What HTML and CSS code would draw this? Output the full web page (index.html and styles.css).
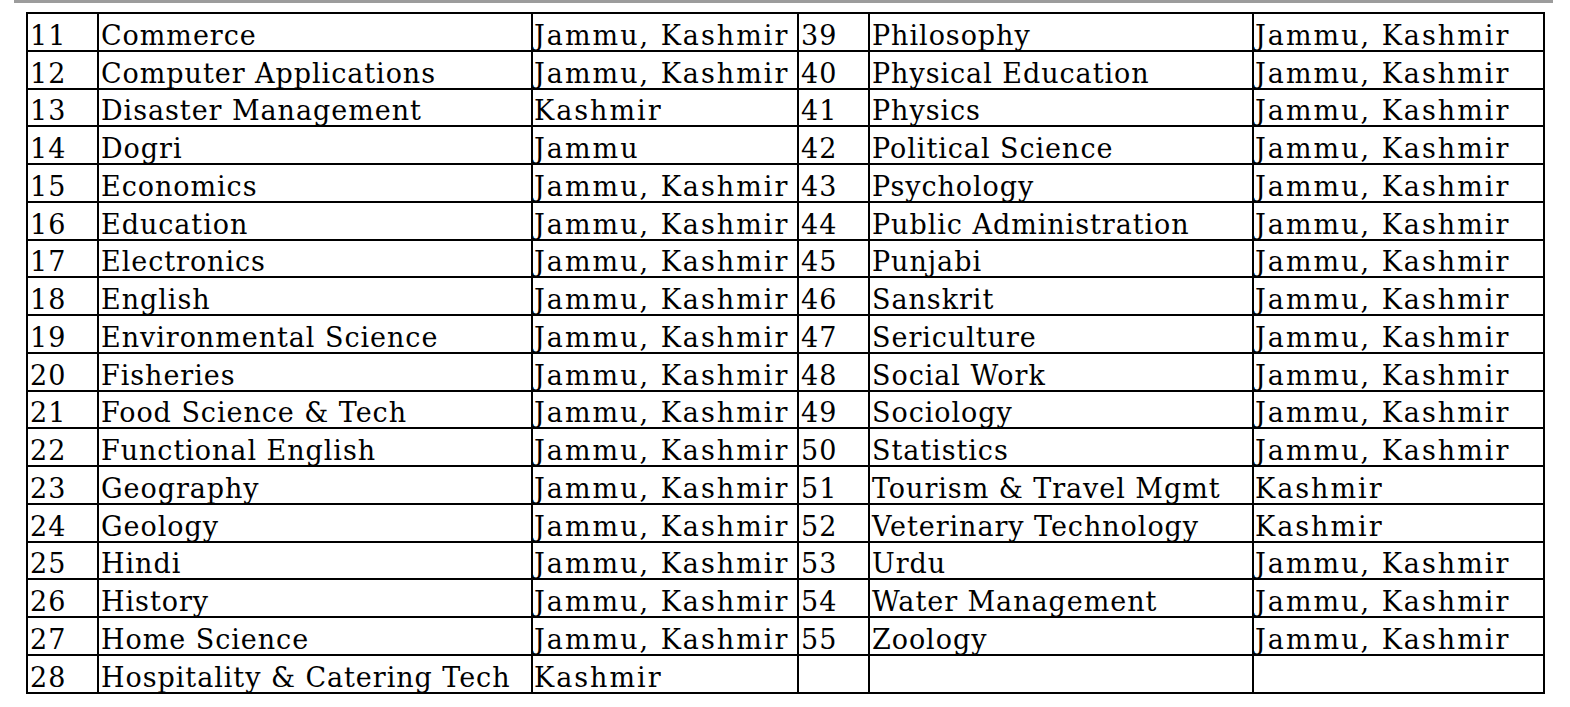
FILE: index.html
```html
<!DOCTYPE html>
<html>
<head>
<meta charset="utf-8">
<link rel="stylesheet" href="styles.css">
</head>
<body>
<div class="topbar"></div>
<table class="grid">
<colgroup>
<col class="c-no"><col class="c-sub"><col class="c-loc"><col class="c-no2"><col class="c-sub2"><col class="c-loc2">
</colgroup>
<tbody>
<tr><td>11</td><td>Commerce</td><td class="loc">Jammu, Kashmir</td><td>39</td><td>Philosophy</td><td class="loc">Jammu, Kashmir</td></tr>
<tr><td>12</td><td>Computer Applications</td><td class="loc">Jammu, Kashmir</td><td>40</td><td>Physical Education</td><td class="loc">Jammu, Kashmir</td></tr>
<tr><td>13</td><td>Disaster Management</td><td class="loc">Kashmir</td><td>41</td><td>Physics</td><td class="loc">Jammu, Kashmir</td></tr>
<tr><td>14</td><td>Dogri</td><td class="loc">Jammu</td><td>42</td><td>Political Science</td><td class="loc">Jammu, Kashmir</td></tr>
<tr><td>15</td><td>Economics</td><td class="loc">Jammu, Kashmir</td><td>43</td><td>Psychology</td><td class="loc">Jammu, Kashmir</td></tr>
<tr><td>16</td><td>Education</td><td class="loc">Jammu, Kashmir</td><td>44</td><td>Public Administration</td><td class="loc">Jammu, Kashmir</td></tr>
<tr><td>17</td><td>Electronics</td><td class="loc">Jammu, Kashmir</td><td>45</td><td>Punjabi</td><td class="loc">Jammu, Kashmir</td></tr>
<tr><td>18</td><td>English</td><td class="loc">Jammu, Kashmir</td><td>46</td><td>Sanskrit</td><td class="loc">Jammu, Kashmir</td></tr>
<tr><td>19</td><td>Environmental Science</td><td class="loc">Jammu, Kashmir</td><td>47</td><td>Sericulture</td><td class="loc">Jammu, Kashmir</td></tr>
<tr><td>20</td><td>Fisheries</td><td class="loc">Jammu, Kashmir</td><td>48</td><td>Social Work</td><td class="loc">Jammu, Kashmir</td></tr>
<tr><td>21</td><td>Food Science &amp; Tech</td><td class="loc">Jammu, Kashmir</td><td>49</td><td>Sociology</td><td class="loc">Jammu, Kashmir</td></tr>
<tr><td>22</td><td>Functional English</td><td class="loc">Jammu, Kashmir</td><td>50</td><td>Statistics</td><td class="loc">Jammu, Kashmir</td></tr>
<tr><td>23</td><td>Geography</td><td class="loc">Jammu, Kashmir</td><td>51</td><td>Tourism &amp; Travel Mgmt</td><td class="loc">Kashmir</td></tr>
<tr><td>24</td><td>Geology</td><td class="loc">Jammu, Kashmir</td><td>52</td><td>Veterinary Technology</td><td class="loc">Kashmir</td></tr>
<tr><td>25</td><td>Hindi</td><td class="loc">Jammu, Kashmir</td><td>53</td><td>Urdu</td><td class="loc">Jammu, Kashmir</td></tr>
<tr><td>26</td><td>History</td><td class="loc">Jammu, Kashmir</td><td>54</td><td>Water Management</td><td class="loc">Jammu, Kashmir</td></tr>
<tr><td>27</td><td>Home Science</td><td class="loc">Jammu, Kashmir</td><td>55</td><td>Zoology</td><td class="loc">Jammu, Kashmir</td></tr>
<tr><td>28</td><td>Hospitality &amp; Catering Tech</td><td class="loc">Kashmir</td><td></td><td></td><td></td></tr>
</tbody>
</table>
</body>
</html>
```
FILE: styles.css
```css
html, body {
  margin: 0;
  padding: 0;
  background: #ffffff;
}
.topbar {
  margin-left: 14px;
  width: 1539px;
  height: 3px;
  background: #9c9c9c;
}
.grid {
  margin-top: 9px;
  margin-left: 26px;
  width: 1519px;
  table-layout: fixed;
  border-collapse: collapse;
  font-family: "DejaVu Serif", "Liberation Serif", serif;
  font-size: 27px;
  letter-spacing: 0.95px;
  color: #000;
}
.c-no { width: 71px; }
.c-sub { width: 434px; }
.c-loc { width: 266px; }
.c-no2 { width: 71px; }
.c-sub2 { width: 384px; }
.c-loc2 { width: 291px; }
.grid tr {
  height: 37.75px;
}
.grid td {
  border: 2px solid #000;
  padding: 0 0 0 2px;
  vertical-align: bottom;
  line-height: 28px;
  white-space: nowrap;
  overflow: hidden;
}
.grid td.loc {
  letter-spacing: 2px;
  padding-left: 1px;
}
```
